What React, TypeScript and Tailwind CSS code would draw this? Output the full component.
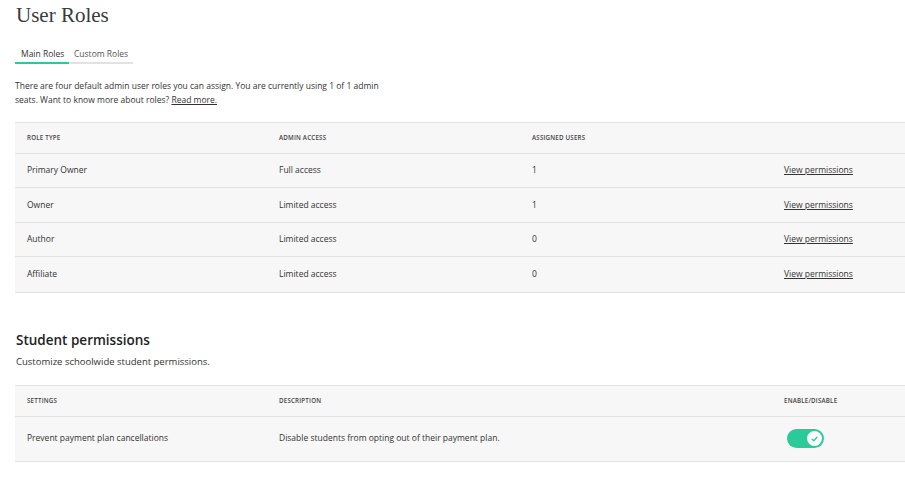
import React from "react";

const roles = [
  { name: "Primary Owner", access: "Full access", users: "1" },
  { name: "Owner", access: "Limited access", users: "1" },
  { name: "Author", access: "Limited access", users: "0" },
  { name: "Affiliate", access: "Limited access", users: "0" },
];

const cols = "grid grid-cols-[252px_253px_252px_1fr] pl-3";

export default function App() {
  return (
    <div className="w-[905px] h-[489px] overflow-hidden bg-white text-[#333] font-['Open_Sans',sans-serif]">
      <div className="w-[1000px] pl-[15px]">
        <h1 className="pl-px pt-[2px] text-[21px] leading-[26px] text-[#3a3a3a] font-['Liberation_Serif',serif]">User Roles</h1>
        <div className="mt-[20px] flex w-[118px] text-[8.5px] text-[#555]">
          <div className="w-[54px] border-b-2 border-[#2bc99a] pb-px pl-[6px] text-[#333]">Main Roles</div>
          <div className="flex-1 border-b-2 border-[#e2e2e2] pb-px pl-[5px]">Custom Roles</div>
        </div>
        <p className="mt-[15px] w-[368px] text-[8.5px] leading-[14px] text-[#333]">
          There are four default admin user roles you can assign. You are currently using 1 of 1 admin seats. Want to know more about roles?{" "}
          <a className="underline">Read more.</a>
        </p>
        <div className="mt-[15px] border-y border-[#e3e3e3] bg-[#f7f7f7] text-[8.5px]">
          <div className={`${cols} h-[31px] items-center border-b border-[#e3e3e3] text-[6.2px] font-semibold tracking-[0.2px] text-[#444]`}>
            <div>ROLE TYPE</div>
            <div>ADMIN ACCESS</div>
            <div>ASSIGNED USERS</div>
            <div></div>
          </div>
          {roles.map((r, i) => (
            <div key={r.name} className={`${cols} h-[34.5px] items-center ${i < roles.length - 1 ? "border-b border-[#e3e3e3]" : ""}`}>
              <div>{r.name}</div>
              <div>{r.access}</div>
              <div>{r.users}</div>
              <div className="underline">View permissions</div>
            </div>
          ))}
        </div>
        <h2 className="mt-[37px] pl-px text-[13.5px] leading-[20px] font-semibold text-[#222]">Student permissions</h2>
        <p className="mt-[5px] pl-px text-[9.5px] leading-[14px] text-[#333]">Customize schoolwide student permissions.</p>
        <div className="mt-[16px] border-y border-[#e3e3e3] bg-[#f7f7f7] text-[8.5px]">
          <div className={`${cols} h-[31px] items-center border-b border-[#e3e3e3] text-[6.2px] font-semibold tracking-[0.2px] text-[#444]`}>
            <div>SETTINGS</div>
            <div>DESCRIPTION</div>
            <div></div>
            <div>ENABLE/DISABLE</div>
          </div>
          <div className={`${cols} h-[44px] items-center`}>
            <div>Prevent payment plan cancellations</div>
            <div className="col-span-2">Disable students from opting out of their payment plan.</div>
            <div className="pl-[3px]">
              <div className="flex h-[19px] w-[37px] items-center justify-end rounded-full bg-[#2bcb99] pr-[2px]">
                <div className="flex h-[15px] w-[15px] items-center justify-center rounded-full bg-white">
                  <svg width="7" height="6" viewBox="0 0 7 6" fill="none">
                    <path d="M1 3.2 L2.8 4.8 L6 1.2" stroke="#2bcb99" strokeWidth="1.3" strokeLinecap="round" strokeLinejoin="round" />
                  </svg>
                </div>
              </div>
            </div>
          </div>
        </div>
      </div>
    </div>
  );
}
